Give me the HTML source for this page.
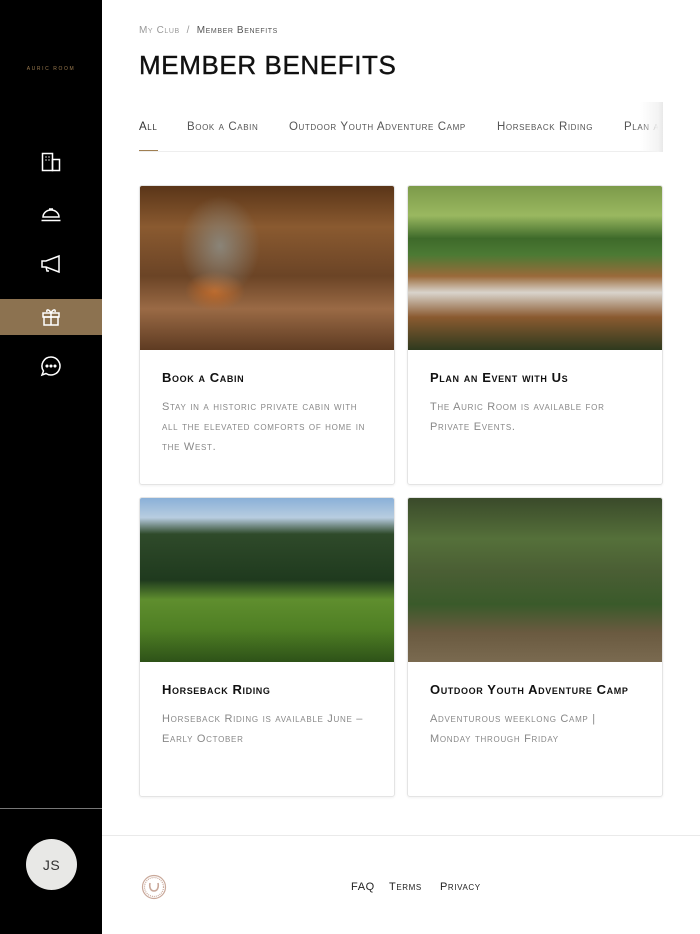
<!DOCTYPE html>
<html><head><meta charset="utf-8">
<style>
*{margin:0;padding:0;box-sizing:border-box}
body{width:700px;height:934px;overflow:hidden;background:#fff;font-family:"Liberation Sans",sans-serif;position:relative}
.sc{font-variant:small-caps;letter-spacing:.6px}
#side{position:absolute;left:0;top:0;width:102px;height:934px;background:#000}
#side .logo{position:absolute;top:66px;width:102px;text-align:center;color:#9a7a4f;font-size:5px;letter-spacing:1.6px}
.ic{position:absolute;left:0;width:102px;height:36px;display:flex;align-items:center;justify-content:center}
.ic.act{background:#8c7250}
#side .line{position:absolute;left:0;top:808px;width:102px;height:1px;background:#777}
.av{position:absolute;left:26px;top:839px;width:51px;height:51px;border-radius:50%;background:#e8e8e6;display:flex;align-items:center;justify-content:center;font-size:14px;color:#333;letter-spacing:.5px}
.crumb{position:absolute;left:139px;top:25px;font-size:10px;color:#999}
.crumb b{font-weight:normal;color:#555}
h1{position:absolute;left:139px;top:50px;font-size:26px;font-weight:normal;color:#111;letter-spacing:.6px;-webkit-text-stroke:.4px #111}
.tabs{position:absolute;left:139px;top:120px;width:524px;height:32px;border-bottom:1px solid #eee;font-size:11.5px;color:#555;white-space:nowrap;overflow:hidden}
.tabs span{position:absolute;top:1px}
.tabs .u{position:absolute;left:0;bottom:-1px;width:19px;height:2px;background:#a07f52}
.fade{position:absolute;left:640px;top:102px;width:23px;height:50px;background:linear-gradient(90deg,rgba(255,255,255,0),#f3f3f3 80%,#e8e8e8)}
.card{position:absolute;width:256px;height:300px;border:1px solid #e4e4e4;border-radius:3px;overflow:hidden;box-shadow:0 1px 2px rgba(0,0,0,.06)}
.card .img{height:164px}
.card h3{position:absolute;left:22px;top:184px;font-size:13px;font-weight:bold;color:#111;font-variant:small-caps;letter-spacing:.6px}
.card p{position:absolute;left:22px;top:211px;width:208px;font-size:11px;line-height:20px;color:#888;font-variant:small-caps;letter-spacing:.7px}
.foot{position:absolute;left:102px;top:835px;width:598px;height:1px;background:#eaeaea}
.flinks{position:absolute;top:881px;font-size:11px;color:#222}
</style></head><body>
<div id="side">
<div class="logo">AURIC ROOM</div>
<div class="ic" style="top:144px"><svg width="20" height="20" viewBox="0 0 20 20" fill="none" stroke="#fff" stroke-width="1.5"><rect x="1.5" y="1.5" width="10" height="17"/><rect x="11.5" y="7.5" width="7" height="11"/><path d="M4.5 5h1M7.5 5h1M4.5 8h1M7.5 8h1"/></svg></div>
<div class="ic" style="top:196px"><svg width="22" height="20" viewBox="0 0 22 20" fill="none" stroke="#fff" stroke-width="1.5"><path d="M3 13a8 7 0 0 1 16 0z"/><path d="M9 5h4M11 5v1"/><path d="M1.5 16.5h19"/></svg></div>
<div class="ic" style="top:246px"><svg width="22" height="20" viewBox="0 0 22 20" fill="none" stroke="#fff" stroke-width="1.5"><path d="M2 7h4l13-5v16L6 13H2z"/><path d="M6 13l1 4h2"/></svg></div>
<div class="ic act" style="top:299px"><svg width="20" height="20" viewBox="0 0 20 20" fill="none" stroke="#fff" stroke-width="1.5"><rect x="2" y="6" width="16" height="4"/><rect x="3" y="10" width="14" height="8"/><path d="M10 6v12M10 6C8 2 5 2 6 5M10 6c2-4 5-4 4-1"/></svg></div>
<div class="ic" style="top:348px"><svg width="22" height="22" viewBox="0 0 22 22" fill="none" stroke="#fff" stroke-width="1.5"><path d="M11 2a9 9 0 1 1-5 16.5L2 20l1.5-4A9 9 0 0 1 11 2z"/><circle cx="7" cy="11" r=".8" fill="#fff"/><circle cx="11" cy="11" r=".8" fill="#fff"/><circle cx="15" cy="11" r=".8" fill="#fff"/></svg></div>
<div class="line"></div>
<div class="av">JS</div>
</div>
<div class="crumb sc">My Club &nbsp;/&nbsp; <b>Member Benefits</b></div>
<h1>MEMBER BENEFITS</h1>
<div class="tabs sc">
<span style="left:0;color:#333">All</span><span style="left:48px">Book a Cabin</span><span style="left:150px">Outdoor Youth Adventure Camp</span><span style="left:358px">Horseback Riding</span><span style="left:485px">Plan an Event with Us</span>
<div class="u"></div></div>
<div class="fade"></div>

<div class="card" style="left:139px;top:185px"><div class="img" style="background:radial-gradient(ellipse 40px 50px at 80px 60px,#8a8478,transparent),radial-gradient(ellipse 30px 20px at 75px 105px,#c06a2a,transparent),linear-gradient(180deg,#5a3518 0%,#8a5a30 25%,#6b4426 55%,#9a6a45 75%,#5e3b22 100%)"></div><h3>Book a Cabin</h3><p>Stay in a historic private cabin with all the elevated comforts of home in the West.</p></div>
<div class="card" style="left:407px;top:185px"><div class="img" style="background:linear-gradient(180deg,#7c9a4a 0%,#9ab860 18%,#3e6a2a 32%,#4c7a34 42%,#9a6a3a 55%,#d9d4cc 65%,#8a5a30 80%,#2e3a1e 100%)"></div><h3>Plan an Event with Us</h3><p>The Auric Room is available for Private Events.</p></div>
<div class="card" style="left:139px;top:497px"><div class="img" style="background:linear-gradient(180deg,#8ab0d8 0%,#b8cde0 12%,#2f4a2a 22%,#1f3a1e 50%,#5f8e2e 62%,#4f7f24 80%,#2e5218 100%)"></div><h3>Horseback Riding</h3><p>Horseback Riding is available June – Early October</p></div>
<div class="card" style="left:407px;top:497px"><div class="img" style="background:linear-gradient(180deg,#3a4a2a 0%,#55703a 25%,#4a5e34 45%,#3a5a2a 65%,#6a5a40 82%,#7a6a50 100%)"></div><h3>Outdoor Youth Adventure Camp</h3><p>Adventurous weeklong Camp | Monday through Friday</p></div>

<div class="foot"></div>
<svg style="position:absolute;left:141px;top:874px" width="26" height="26" viewBox="0 0 26 26" fill="none" stroke="#c9a89a" stroke-width="1.2"><circle cx="13" cy="13" r="11.5"/><circle cx="13" cy="13" r="9.5" stroke-dasharray="1 1"/><path d="M9 9c-1 5 1 8 4 8s5-3 4-8" stroke-width="1.6"/></svg>
<div class="flinks sc" style="left:351px">FAQ</div>
<div class="flinks sc" style="left:389px">Terms</div>
<div class="flinks sc" style="left:440px">Privacy</div>
</body></html>
